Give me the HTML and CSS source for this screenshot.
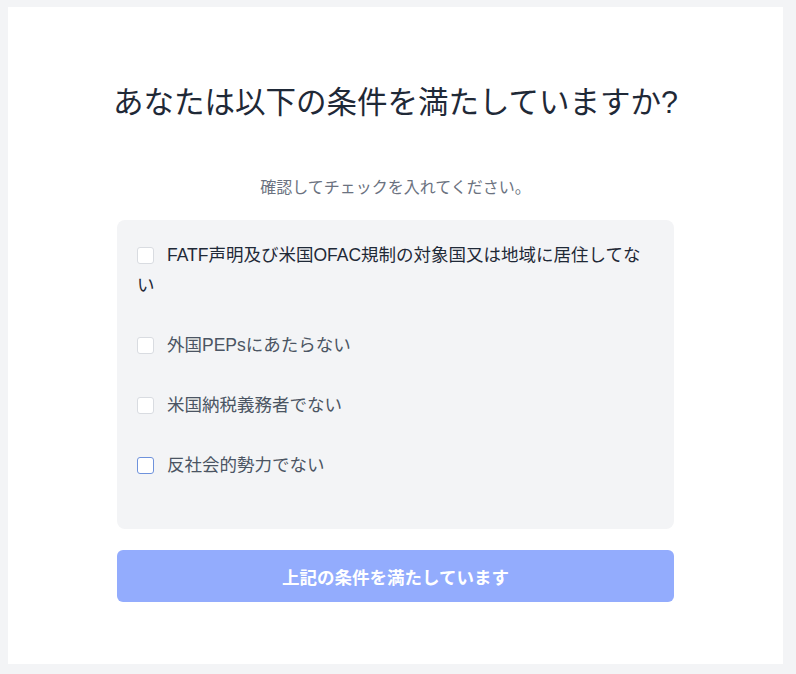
FILE: index.html
```html
<!DOCTYPE html>
<html lang="ja">
<head>
<meta charset="utf-8">
<link rel="stylesheet" href="styles.css">
</head>
<body>
<div class="page">
  <main class="card">
    <div class="content">
      <h1 class="title">あなたは以下の条件を満たしていますか?</h1>
      <p class="subtitle">確認してチェックを入れてください。</p>
      <div class="panel">
        <label class="item item-dark"><span class="box"></span>FATF声明及び米国OFAC規制の対象国又は地域に居住してない</label>
        <label class="item"><span class="box"></span>外国PEPsにあたらない</label>
        <label class="item"><span class="box"></span>米国納税義務者でない</label>
        <label class="item"><span class="box box-focus"></span>反社会的勢力でない</label>
      </div>
      <button class="submit" type="button">上記の条件を満たしています</button>
    </div>
  </main>
</div>
</body>
</html>
```
FILE: styles.css
```css
* { box-sizing: border-box; }
html, body {
  margin: 0;
  padding: 0;
  background: #f3f4f6;
  font-family: "Liberation Sans", "Noto Sans CJK JP", sans-serif;
}
.page {
  padding: 7px 13px 10px 8px;
}
.card {
  background: #ffffff;
  height: 657px;
  padding-top: 77px;
}
.content {
  width: 557px;
  margin: 0 auto;
}
.title {
  margin: 0 -20px;
  font-size: 30.5px;
  line-height: 36px;
  font-weight: 400;
  color: #1f2937;
  text-align: center;
  white-space: nowrap;
}
.subtitle {
  margin: 56px 0 0;
  font-size: 16px;
  line-height: 24px;
  color: #6b7280;
  text-align: center;
}
.panel {
  margin-top: 20px;
  background: #f3f4f6;
  border-radius: 8px;
  padding: 20px 20px 19px;
}
.item {
  display: block;
  font-size: 17.5px;
  line-height: 30px;
  color: #4b5563;
  margin-bottom: 30px;
}
.item-dark { color: #1f2937; }
.box {
  display: inline-block;
  width: 17px;
  height: 17px;
  background: #ffffff;
  border: 1px solid #d9dce1;
  border-radius: 3px;
  vertical-align: -3px;
  margin-right: 13px;
}
.box-focus {
  border: 1.5px solid #6e92dc;
}
.submit {
  display: block;
  width: 100%;
  height: 52px;
  margin-top: 21px;
  border: none;
  border-radius: 6px;
  background: #93acfd;
  color: #ffffff;
  font-family: "Liberation Sans", "Noto Sans CJK JP", sans-serif;
  font-size: 17.5px;
  font-weight: 700;
}
```
